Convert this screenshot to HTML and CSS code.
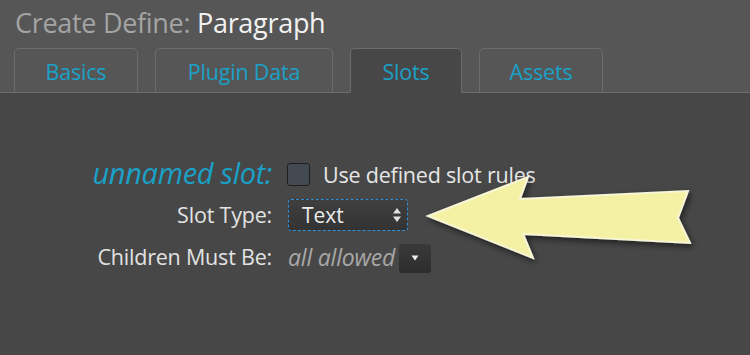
FILE: index.html
```html
<!DOCTYPE html>
<html>
<head>
<meta charset="utf-8">
<link rel="stylesheet" href="styles.css">
</head>
<body>
<div class="page">
  <header class="header">
    <h1 class="title"><span class="muted">Create Define:</span> Paragraph</h1>
    <nav class="tabs">
      <div class="tab tab-basics">Basics</div>
      <div class="tab tab-plugin">Plugin Data</div>
      <div class="tab tab-slots active">Slots</div>
      <div class="tab tab-assets">Assets</div>
    </nav>
  </header>
  <main class="content">
    <div class="form">
      <div class="label slot-name">unnamed slot:</div>
      <div class="value">
        <span class="checkbox"></span>
        <span class="check-label">Use defined slot rules</span>
      </div>
      <div class="label">Slot Type:</div>
      <div class="value">
        <div class="select">
          <span>Text</span>
          <svg class="updown" width="10" height="16" viewBox="0 0 10 16"><path d="M5 1 L9 6.5 H1 Z M5 15 L9 9.5 H1 Z" fill="#e0e0e0"/></svg>
        </div>
      </div>
      <div class="label">Children Must Be:</div>
      <div class="value">
        <span class="allowed">all allowed</span>
        <span class="dropbtn"><svg width="8" height="6" viewBox="0 0 8 6"><path d="M0.5 0.5 H7.5 L4 5.5 Z" fill="#f0f0f0"/></svg></span>
      </div>
    </div>
    <svg class="arrow" width="300" height="110" viewBox="420 168 300 110">
      <defs>
        <filter id="sh" x="-20%" y="-30%" width="140%" height="160%">
          <feDropShadow dx="2" dy="3" stdDeviation="3" flood-color="#000" flood-opacity="0.55"/>
        </filter>
      </defs>
      <polygon points="428,216 528,177 520,199 688,191 678,218 690,243 523,234 533,258" fill="#f5f1a4" stroke="#f8f6d8" stroke-width="2" stroke-linejoin="miter" filter="url(#sh)"/>
    </svg>
  </main>
</div>
</body>
</html>
```

FILE: styles.css
```css
* { box-sizing: border-box; }
html, body { margin: 0; padding: 0; }
body {
  width: 750px;
  height: 355px;
  overflow: hidden;
  background: #474747;
  font-family: "Open Sans", "Lato", sans-serif;
}
.page { width: 750px; height: 355px; display: flex; flex-direction: column; }
.header {
  background: #565656;
  height: 93px;
  border-bottom: 1px solid #6c6c6c;
  display: flex;
  flex-direction: column;
  justify-content: space-between;
}
.title {
  margin: 0;
  padding: 5px 0 0 15px;
  font-size: 27px;
  font-weight: 400;
  color: #f2f2f2;
  line-height: 36px;
  letter-spacing: -0.3px;
}
.title .muted { color: #a4a4a4; }
.tabs {
  display: flex;
  padding-left: 14px;
  gap: 17px;
  margin-bottom: -1px;
}
.tab {
  height: 45px;
  border: 1px solid #6c6c6c;
  border-radius: 5px 5px 0 0;
  color: #1aa1c8;
  font-size: 21.5px;
  letter-spacing: -0.2px;
  display: flex;
  align-items: center;
  justify-content: center;
  padding-top: 2px;
  background: #565656;
}
.tab-basics { width: 124px; }
.tab-plugin { width: 178px; }
.tab-slots { width: 112px; }
.tab-assets { width: 124px; }
.tab.active {
  background: #474747;
  border-bottom-color: #474747;
}
.content {
  position: relative;
  flex: 1;
}
.form {
  display: grid;
  grid-template-columns: 272px auto;
  column-gap: 16px;
  padding-top: 59px;
  align-items: center;
}
.label {
  text-align: right;
  color: #e2e2e2;
  font-size: 21.5px;
  letter-spacing: -0.2px;
  height: 42px;
  line-height: 42px;
}
.label.slot-name {
  color: #1aa1c8;
  font-style: italic;
  font-size: 29px;
  letter-spacing: -0.3px;
  height: 40px;
  line-height: 40px;
}
.value {
  display: flex;
  align-items: center;
  height: 42px;
}
.checkbox {
  width: 23px;
  height: 23px;
  background: #434a52;
  border: 1.5px solid #1e1e1e;
  border-radius: 3px;
  margin-left: -1px;
  margin-top: 2px;
  flex: none;
}
.check-label {
  color: #e6e6e6;
  font-size: 21.5px;
  letter-spacing: -0.2px;
  margin-left: 13px;
  margin-top: 2px;
}
.select {
  width: 120px;
  height: 32px;
  border: 1.5px dashed #2f8fd8;
  border-radius: 3px;
  background: linear-gradient(#3f3f3f, #333333);
  display: flex;
  align-items: center;
  justify-content: space-between;
  padding: 0 5px 0 13px;
  color: #ececec;
  font-size: 21px;
}
.allowed {
  color: #a8a8a8;
  font-style: italic;
  font-size: 23px;
  letter-spacing: -0.2px;
}
.dropbtn {
  width: 32px;
  height: 29px;
  margin-left: 4px;
  margin-top: 2px;
  border-radius: 3px;
  background: linear-gradient(#3a3a3a, #2c2c2c);
  display: flex;
  align-items: center;
  justify-content: center;
  flex: none;
}
.arrow {
  position: absolute;
  left: 420px;
  top: 75px;
}
```
